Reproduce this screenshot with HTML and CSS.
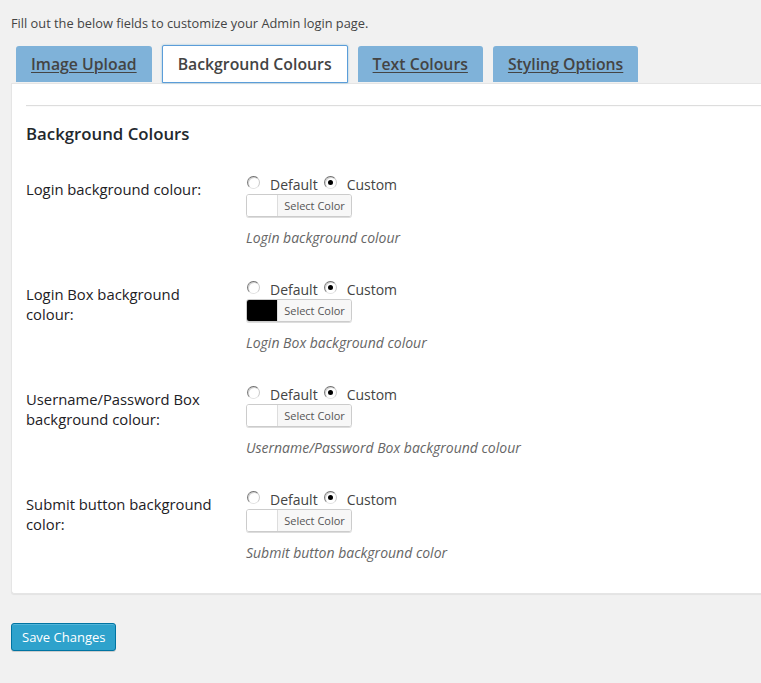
FILE: index.html
```html
<!DOCTYPE html>
<html>
<head>
<meta charset="utf-8">
<link rel="stylesheet" href="styles.css">
</head>
<body>
<div class="wrap">
  <p class="intro">Fill out the below fields to customize your Admin login page.</p>
  <div class="tabs">
    <a class="tab" href="#">Image Upload</a>
    <a class="tab active" href="#">Background Colours</a>
    <a class="tab" href="#">Text Colours</a>
    <a class="tab" href="#">Styling Options</a>
  </div>
  <div class="panel">
    <hr class="rule">
    <h3 class="section-title">Background Colours</h3>
    <div class="rows">
      <div class="row">
        <div class="label">Login background colour:</div>
        <div class="field">
          <div class="radios">
            <label class="opt"><input type="radio" name="r1"><span>Default</span></label>
            <label class="opt"><input type="radio" name="r1" checked><span>Custom</span></label>
          </div>
          <div class="picker"><span class="swatch"></span><span class="pick-btn">Select Color</span></div>
          <p class="desc">Login background colour</p>
        </div>
      </div>
      <div class="row">
        <div class="label">Login Box background colour:</div>
        <div class="field">
          <div class="radios">
            <label class="opt"><input type="radio" name="r2"><span>Default</span></label>
            <label class="opt"><input type="radio" name="r2" checked><span>Custom</span></label>
          </div>
          <div class="picker"><span class="swatch black"></span><span class="pick-btn">Select Color</span></div>
          <p class="desc">Login Box background colour</p>
        </div>
      </div>
      <div class="row">
        <div class="label">Username/Password Box background colour:</div>
        <div class="field">
          <div class="radios">
            <label class="opt"><input type="radio" name="r3"><span>Default</span></label>
            <label class="opt"><input type="radio" name="r3" checked><span>Custom</span></label>
          </div>
          <div class="picker"><span class="swatch"></span><span class="pick-btn">Select Color</span></div>
          <p class="desc">Username/Password Box background colour</p>
        </div>
      </div>
      <div class="row">
        <div class="label">Submit button background color:</div>
        <div class="field">
          <div class="radios">
            <label class="opt"><input type="radio" name="r4"><span>Default</span></label>
            <label class="opt"><input type="radio" name="r4" checked><span>Custom</span></label>
          </div>
          <div class="picker"><span class="swatch"></span><span class="pick-btn">Select Color</span></div>
          <p class="desc">Submit button background color</p>
        </div>
      </div>
    </div>
  </div>
  <button class="save" type="button">Save Changes</button>
</div>
</body>
</html>
```

FILE: styles.css
```css
html, body {
  margin: 0;
  padding: 0;
  background: #f1f1f1;
  overflow: hidden;
}
body {
  font-family: "Open Sans", "DejaVu Sans", sans-serif;
  color: #444;
  width: 761px;
  height: 683px;
}
.wrap {
  padding-left: 11px;
}
.intro {
  margin: 0;
  padding-top: 13px;
  font-size: 12.8px;
  line-height: 20px;
  color: #444;
}
.tabs {
  display: flex;
  align-items: flex-start;
  gap: 10px;
  margin-top: 12px;
  padding-left: 5px;
  height: 38px;
}
.tab {
  box-sizing: border-box;
  display: block;
  margin-top: 1px;
  height: 36px;
  line-height: 36px;
  padding: 0 15px;
  background: #7fb2d9;
  border-radius: 3px 3px 0 0;
  font-size: 15.8px;
  font-weight: 600;
  color: #444;
  text-decoration: underline;
  text-underline-offset: 2px;
  text-decoration-thickness: 1px;
  white-space: nowrap;
}
.tab.active {
  margin-top: 0;
  height: 38px;
  line-height: 36px;
  padding: 0 15px;
  background: #fff;
  border: 1px solid #5b9dd9;
  border-radius: 2px 2px 0 0;
  text-decoration: none;
  box-shadow: 0 0 2px rgba(30,140,190,.5);
}
.panel {
  box-sizing: border-box;
  width: 800px;
  background: #fff;
  border: 1px solid #e5e5e5;
  border-right: none;
  border-radius: 0 0 0 3px;
  box-shadow: 0 1px 1px rgba(0,0,0,.06);
  padding: 21px 0 14px 14px;
}
.rule {
  margin: 0;
  height: 0;
  border: 0;
  border-top: 1px solid #ddd;
  border-bottom: 1px solid #fafafa;
}
.section-title {
  margin: 15px 0 0;
  font-size: 16.8px;
  font-weight: 600;
  line-height: 24px;
  color: #23282d;
}
.rows {
  margin-top: 13px;
}
.row {
  display: flex;
  height: 105px;
}
.label {
  box-sizing: border-box;
  width: 220px;
  padding: 20px 30px 0 0;
  font-size: 14.8px;
  font-weight: 400;
  line-height: 20px;
  color: #1d2125;
}
.field {
  padding-top: 15px;
}
.radios {
  display: flex;
  height: 20px;
  align-items: center;
  font-size: 14px;
  color: #444;
}
.opt {
  display: flex;
  align-items: center;
}
.opt input {
  -webkit-appearance: none;
  appearance: none;
  box-sizing: border-box;
  width: 13px;
  height: 13px;
  margin: -3px 10px 0 1px;
  border-radius: 50%;
  border: 1px solid;
  border-color: #6f6f6f #c8c8c8 #e2e2e2 #7a7a7a;
  background: #fff;
  box-shadow: inset 1px 1px 0 #d4d4d4;
  position: relative;
}
.opt + .opt input {
  margin-left: 6px;
}
.opt input:checked::after {
  content: "";
  position: absolute;
  left: 3px;
  top: 3px;
  width: 5px;
  height: 5px;
  border-radius: 50%;
  background: #000;
}
.picker {
  display: flex;
  width: 106px;
  height: 23px;
  box-sizing: border-box;
  border: 1px solid #ccc;
  border-radius: 3px;
  box-shadow: 0 1px 0 #ddd;
  overflow: hidden;
}
.swatch {
  width: 30px;
  background: #fff;
  border-right: 1px solid #ddd;
}
.swatch.black {
  background: #000;
}
.pick-btn {
  flex: 1;
  background: #f7f7f7;
  font-size: 11px;
  line-height: 21px;
  text-align: center;
  color: #555;
}
.desc {
  margin: 11px 0 0;
  font-size: 14px;
  line-height: 20px;
  font-style: italic;
  color: #666;
}
.save {
  display: block;
  margin-top: 29px;
  box-sizing: border-box;
  height: 28px;
  padding: 0 10px;
  background: #2ea2cc;
  border: 1px solid #0074a2;
  border-radius: 3px;
  box-shadow: inset 0 1px 0 rgba(120,200,230,.5), 0 1px 0 rgba(0,0,0,.15);
  color: #fff;
  font-family: "Open Sans", "DejaVu Sans", sans-serif;
  font-size: 13px;
  line-height: 26px;
  white-space: nowrap;
}
```
